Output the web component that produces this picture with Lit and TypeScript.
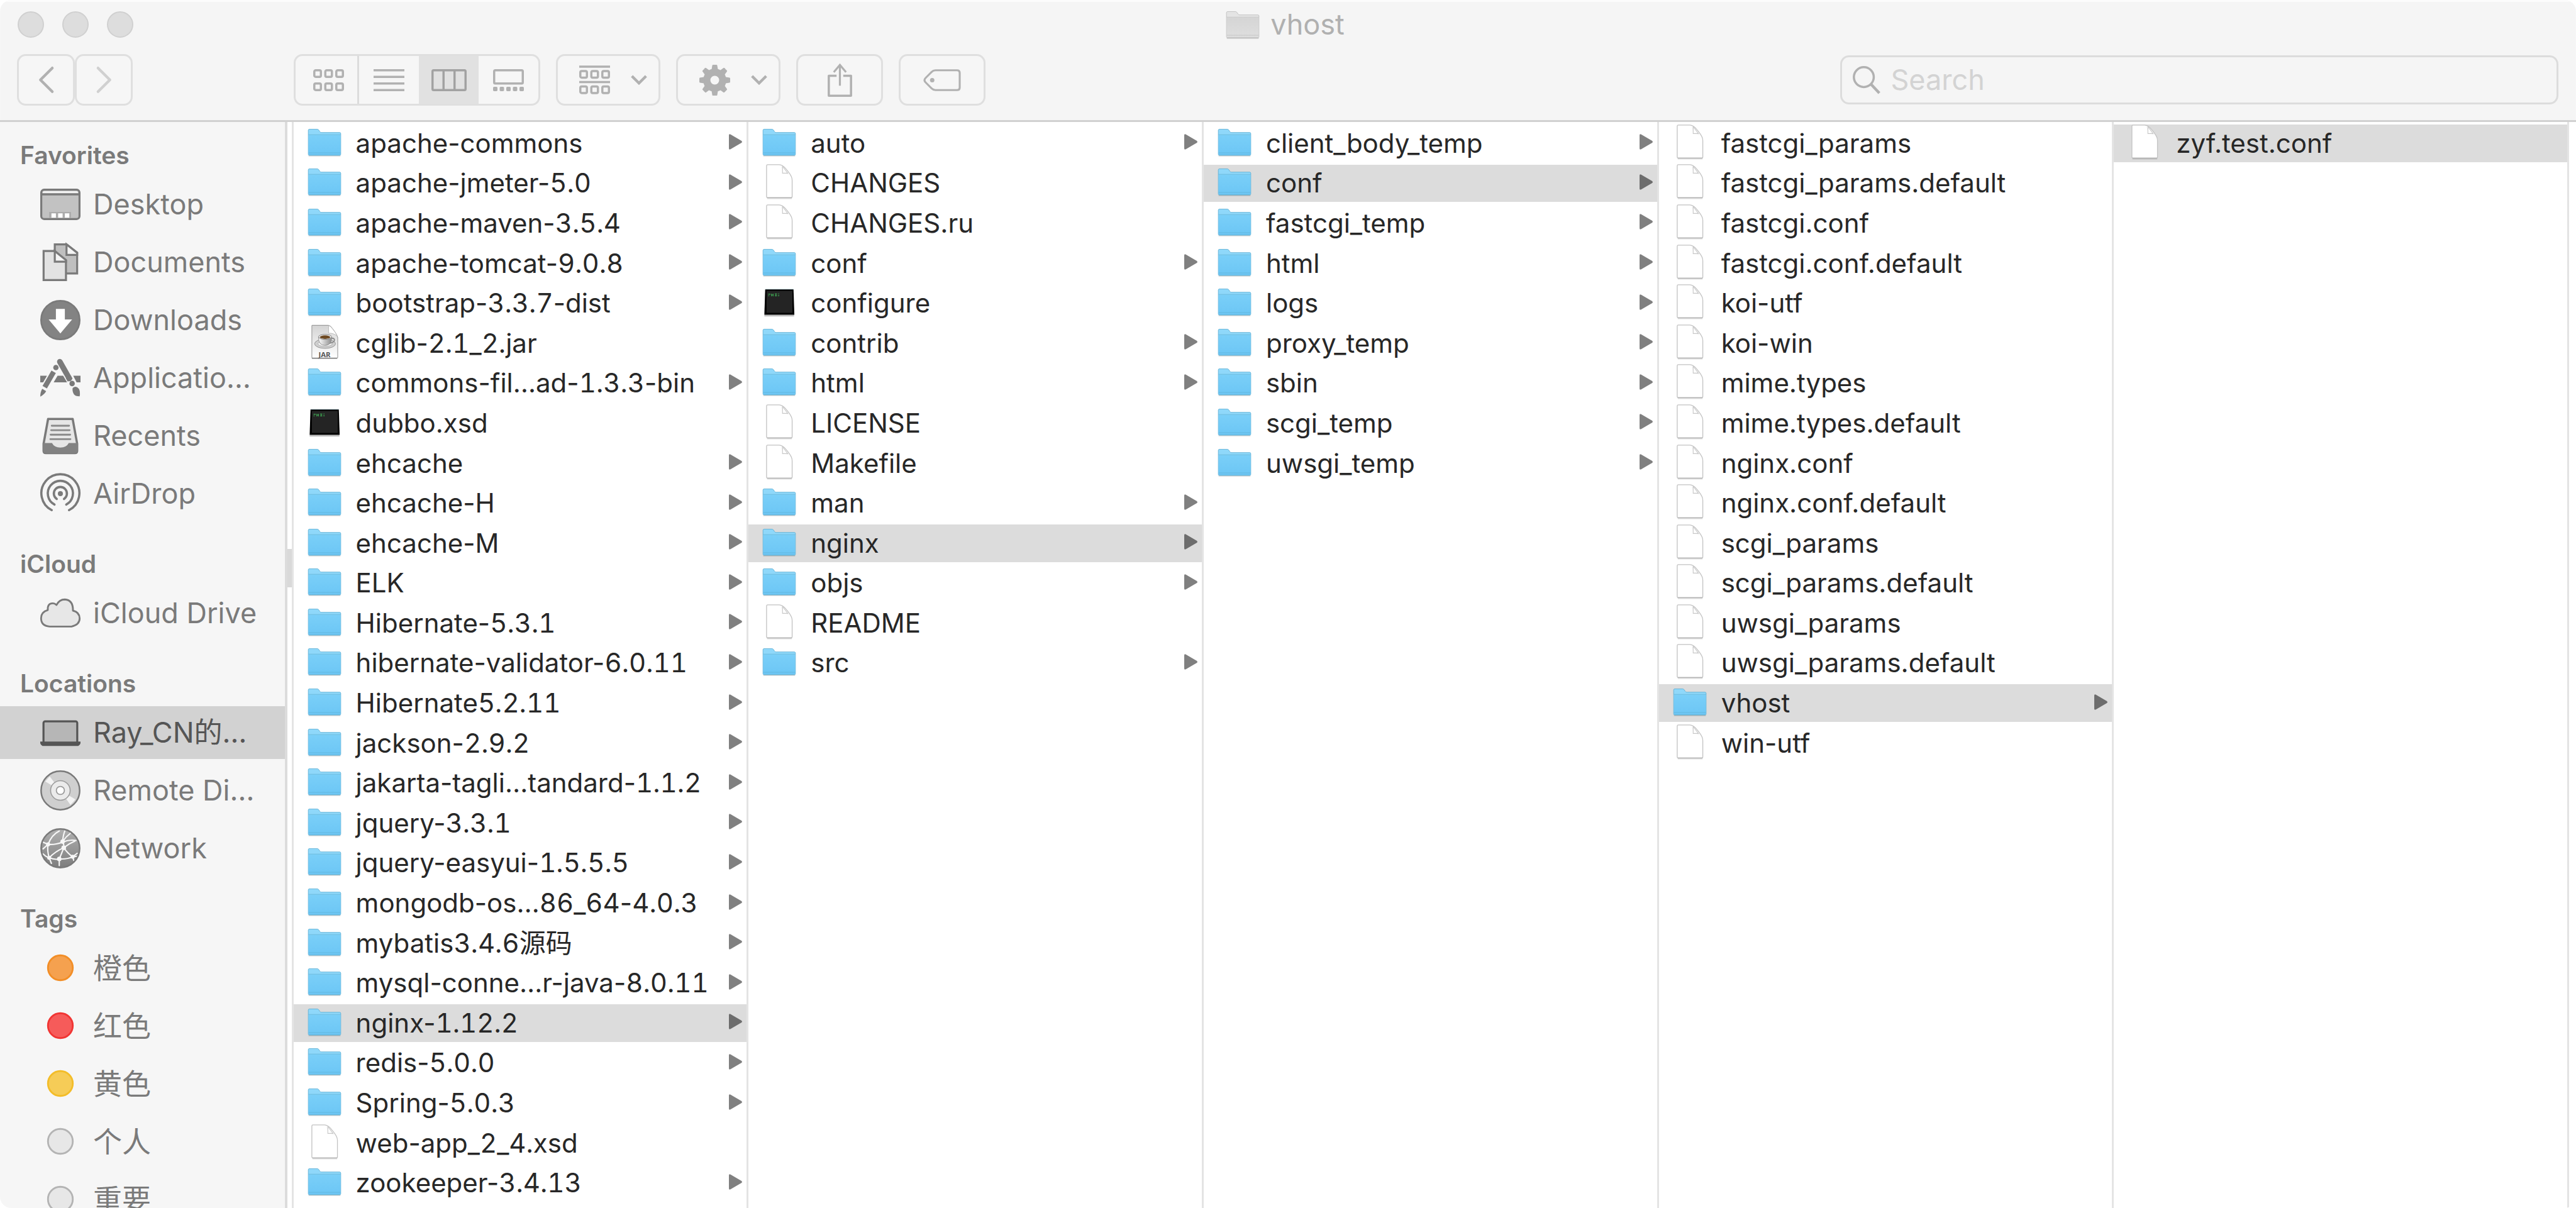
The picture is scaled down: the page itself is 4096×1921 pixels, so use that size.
import { LitElement, html, svg, css, nothing } from "lit";
import type { SVGTemplateResult } from "lit";
import { customElement, property, state } from "lit/decorators.js";
import { classMap } from "lit/directives/class-map.js";

type FileKind = "folder" | "doc" | "exec" | "jar";

interface FileEntry {
  name: string;
  kind: FileKind;
}

interface Place {
  label: string;
  icon: string;
}

interface Section {
  title: string;
  lang?: string;
  places: Place[];
}

const dir = (name: string): FileEntry => ({ name, kind: "folder" });
const doc = (name: string): FileEntry => ({ name, kind: "doc" });

const COLUMNS: { selected: string; files: FileEntry[] }[] = [
  {
    selected: "nginx-1.12.2",
    files: [
      dir("apache-commons"),
      dir("apache-jmeter-5.0"),
      dir("apache-maven-3.5.4"),
      dir("apache-tomcat-9.0.8"),
      dir("bootstrap-3.3.7-dist"),
      { name: "cglib-2.1_2.jar", kind: "jar" },
      dir("commons-fil…ad-1.3.3-bin"),
      { name: "dubbo.xsd", kind: "exec" },
      dir("ehcache"),
      dir("ehcache-H"),
      dir("ehcache-M"),
      dir("ELK"),
      dir("Hibernate-5.3.1"),
      dir("hibernate-validator-6.0.11"),
      dir("Hibernate5.2.11"),
      dir("jackson-2.9.2"),
      dir("jakarta-tagli…tandard-1.1.2"),
      dir("jquery-3.3.1"),
      dir("jquery-easyui-1.5.5.5"),
      dir("mongodb-os…86_64-4.0.3"),
      dir("mybatis3.4.6源码"),
      dir("mysql-conne…r-java-8.0.11"),
      dir("nginx-1.12.2"),
      dir("redis-5.0.0"),
      dir("Spring-5.0.3"),
      doc("web-app_2_4.xsd"),
      dir("zookeeper-3.4.13"),
    ],
  },
  {
    selected: "nginx",
    files: [
      dir("auto"),
      doc("CHANGES"),
      doc("CHANGES.ru"),
      dir("conf"),
      { name: "configure", kind: "exec" },
      dir("contrib"),
      dir("html"),
      doc("LICENSE"),
      doc("Makefile"),
      dir("man"),
      dir("nginx"),
      dir("objs"),
      doc("README"),
      dir("src"),
    ],
  },
  {
    selected: "conf",
    files: [
      dir("client_body_temp"),
      dir("conf"),
      dir("fastcgi_temp"),
      dir("html"),
      dir("logs"),
      dir("proxy_temp"),
      dir("sbin"),
      dir("scgi_temp"),
      dir("uwsgi_temp"),
    ],
  },
  {
    selected: "vhost",
    files: [
      doc("fastcgi_params"),
      doc("fastcgi_params.default"),
      doc("fastcgi.conf"),
      doc("fastcgi.conf.default"),
      doc("koi-utf"),
      doc("koi-win"),
      doc("mime.types"),
      doc("mime.types.default"),
      doc("nginx.conf"),
      doc("nginx.conf.default"),
      doc("scgi_params"),
      doc("scgi_params.default"),
      doc("uwsgi_params"),
      doc("uwsgi_params.default"),
      dir("vhost"),
      doc("win-utf"),
    ],
  },
  { selected: "zyf.test.conf", files: [doc("zyf.test.conf")] },
];

const SECTIONS: Section[] = [
  {
    title: "Favorites",
    places: [
      { label: "Desktop", icon: "desktop" },
      { label: "Documents", icon: "documents" },
      { label: "Downloads", icon: "downloads" },
      { label: "Applicatio…", icon: "applications" },
      { label: "Recents", icon: "recents" },
      { label: "AirDrop", icon: "airdrop" },
    ],
  },
  { title: "iCloud", places: [{ label: "iCloud Drive", icon: "cloud" }] },
  {
    title: "Locations",
    places: [
      { label: "Ray_CN的…", icon: "laptop" },
      { label: "Remote Di…", icon: "disc" },
      { label: "Network", icon: "network" },
    ],
  },
  {
    title: "Tags",
    lang: "zh-CN",
    places: [
      { label: "橙色", icon: "tag-orange" },
      { label: "红色", icon: "tag-red" },
      { label: "黄色", icon: "tag-yellow" },
      { label: "个人", icon: "tag-none" },
      { label: "重要", icon: "tag-none" },
    ],
  },
];

/* ---------- file icons, drawn on a 64 x 64 grid ---------- */

const folder = (
  back: string,
  top: string,
  bottom: string,
  edge: string
): SVGTemplateResult => svg`
  <defs>
    <linearGradient id="face" x1="0" y1="0" x2="0" y2="1">
      <stop offset="0" stop-color=${top} />
      <stop offset="1" stop-color=${bottom} />
    </linearGradient>
  </defs>
  <path d="M3 57h58" stroke="#000" stroke-opacity=".16" stroke-width="2" />
  <path d="M2.500 10.500q0-2 2-2h14q2 0 3 1.500l2 3q1 1.500 3 1.500h33q2 0 2 2v37.500q0 2-2 2h-55q-2 0-2-2z" fill=${back} stroke=${edge} />
  <path d="M3 19h58v34.500q0 2-2 2h-54q-2 0-2-2z" fill="url(#face)" />
  <path d="M3 18.500h58" stroke=${edge} stroke-opacity=".8" />
  <path d="M3 51.500h58M4 55.500h56" stroke=${edge} stroke-opacity=".8" />
`;

const FILE_ICONS: Record<string, SVGTemplateResult> = {
  folder: folder("#8fd8fa", "#7acff8", "#6cc6f5", "#5fafd3"),
  "folder-dim": folder("#e4e4e4", "#d5d5d5", "#dedede", "#bdbdbd"),
  doc: svg`
    <path d="M10 62.500h45" stroke="#000" stroke-opacity=".14" stroke-width="2" />
    <path d="M9 3q0-2 2-2h21q6 0 12 7.500q7 8 10 14q1.500 3 1.500 7v29q0 2.500-2 2.500h-42.500q-2 0-2-2z" fill="#fff" stroke="#c2c2c2" stroke-width="1.500" />
    <path d="M33 1.500q5 5 5 16q6-2 12 2.500" fill="#ededed" fill-opacity=".7" stroke="none" />
    <path d="M38 4v12.500h9.500z" fill="#fff" stroke="#c8c8c8" stroke-width="1.300" />
    <path d="M10 61h44.500" stroke="#b2b2b2" stroke-width="1.500" />
  `,
  exec: svg`
    <path d="M5 57h54" stroke="#000" stroke-opacity=".25" stroke-width="3" />
    <path d="M7 9h51" stroke="#b5dcea" />
    <path d="M6.500 9.500h51.500l1.500 46h-54.500z" fill="#000" />
    <path d="M9 12h47v40h-47z" fill="#242424" />
    <path d="M12 18h4M12 21h2M18 17v5M21 17v5M18 19.500h3M24 17.500h4M24 21h4M26 17v5M31 16.500v1.500M31 19v3" stroke="#3fae55" stroke-width="1.500" opacity=".85" />
  `,
  jar: svg`
    <defs>
      <linearGradient id="sheet" x1="0" y1="0" x2="0" y2="1">
        <stop offset="0" stop-color="#d4d4d4" />
        <stop offset=".65" stop-color="#f0f0f0" />
        <stop offset="1" stop-color="#fff" />
      </linearGradient>
      <linearGradient id="cup" x1="0" y1="0" x2="1" y2="0">
        <stop offset="0" stop-color="#fff" />
        <stop offset="1" stop-color="#8c8c8c" />
      </linearGradient>
    </defs>
    <path d="M9 2.500q0-1 1-1h29q3 0 8 7q7 9 9 15v36q0 1.500-1.500 1.500h-44q-1.500 0-1.500-1.500z" fill="url(#sheet)" stroke="#9c9c9c" stroke-width="1.300" />
    <path d="M39.500 2v14q8-1 15.500 5q-3-7-8-12.500q-4-6-7.500-6.500z" fill="#fff" stroke="#b5b5b5" />
    <ellipse cx="33" cy="35" rx="19" ry="8.500" fill="#cfcfcf" stroke="#8d8d8d" />
    <ellipse cx="33" cy="35" rx="13" ry="5" fill="#f1f1f1" stroke="#aaa" />
    <path d="M43 25q8-1 7 4q-1 4-9 5" fill="none" stroke="#8a8a8a" stroke-width="2.200" />
    <path d="M21 23q0 15 12 15t12-15z" fill="url(#cup)" stroke="#8c8c8c" />
    <ellipse cx="33" cy="22.500" rx="12" ry="4.500" fill="#efefef" stroke="#777" />
    <ellipse cx="33" cy="23" rx="9.500" ry="3.200" fill="#6e4a23" />
    <text x="32" y="59" text-anchor="middle" font-family="Open Sans, Liberation Sans, sans-serif" font-weight="700" font-size="13" fill="#555">JAR</text>
    <path d="M9 61.500h46" stroke="#777" stroke-width="1.500" />
  `,
};

/* ---------- sidebar icons, drawn on a 72 x 72 grid ---------- */

const tag = (fill: string, stroke: string): SVGTemplateResult => svg`
  <circle cx="36" cy="36" r="22.200" fill=${fill} stroke=${stroke} stroke-width="3.200" />
`;

const PLACE_ICONS: Record<string, SVGTemplateResult> = {
  desktop: svg`
    <rect x="2" y="10" width="68" height="52" rx="5" fill="#c2c2c2" />
    <path d="M4 17q0-5 4-5h56q4 0 4 5z" fill="#f2f2f2" />
    <path d="M16 60v-10.500h39v10.500" fill="#ababab" />
    <path d="M20 52h8v8h-8zM32 52h8v8h-8zM44 52h8v8h-8z" fill="#fff" />
    <path d="M2 18h68" stroke="currentColor" stroke-width="4" />
    <rect x="1.800" y="9.800" width="68.400" height="52.400" rx="5" fill="none" stroke="currentColor" stroke-width="3.600" />
  `,
  documents: svg`
    <g stroke="currentColor" stroke-width="3.600" stroke-linejoin="miter">
      <path d="M26 4h21l19 15v37h-40z" fill="#bfbfbf" />
      <path d="M47 4v19h19v-4z" fill="#f5f5f5" />
      <path d="M6 16h20l20 17v35h-40z" fill="#e2e2e2" />
      <path d="M26 16v19h20v-3z" fill="#f5f5f5" />
    </g>
  `,
  downloads: svg`
    <circle cx="36" cy="36" r="34.500" fill="#838383" stroke="currentColor" stroke-width="3" />
    <path d="M28 16h16v19h13l-21 25-21-25h13z" fill="#fff" />
  `,
  applications: svg`
    <path d="M0 32h12l-2 12h-10zM31 32h10l7 12h-24zM59 32h13v12h-7z" fill="currentColor" />
    <g fill="none" stroke="#f6f6f6" stroke-width="13">
      <path d="M28 18 5 57M35 7l24 42" />
    </g>
    <circle cx="28" cy="17.500" r="4.800" fill="currentColor" />
    <circle cx="57" cy="46" r="4.800" fill="currentColor" />
    <g fill="none" stroke="currentColor">
      <path d="M24 25 8 52.500" stroke-width="9" />
      <path d="M35 7l17 30" stroke-width="10" stroke-linecap="round" />
      <path d="M50 34l3.500 6" stroke-width="10" />
    </g>
    <path d="M3.500 55.500l7 4q-2 5-10.500 10q0-8 3.500-14z" fill="currentColor" />
    <path d="M58 54q6-5 11 1.500q3 5 1.500 13.500q-8 0-10.500-4q-3-5-2-11z" fill="currentColor" />
  `,
  recents: svg`
    <path d="M14 6h44l8 44v13q0 4-4 4h-52q-4 0-4-4v-13z" fill="#e6e6e6" stroke="currentColor" stroke-width="4" stroke-linejoin="round" />
    <path d="M5 49h16q4 8 15 8t15-8h16v13q0 5-5 5h-52q-5 0-5-5z" fill="#828282" />
    <path d="M20.500 18h31M19.500 26h33M18.500 34h35M18 42h36" stroke="#8a8a8a" stroke-width="3.200" stroke-linecap="round" />
  `,
  airdrop: svg`
    <circle cx="36" cy="36" r="4.500" fill="currentColor" />
    <g fill="none" stroke="currentColor" stroke-width="4" stroke-linecap="round">
      <path d="M29.500 45.500a11.700 11.700 0 1 1 13 0" />
      <path d="M25.500 55.500a22.500 22.500 0 1 1 21 0" />
      <path d="M20.500 65.500a34 34 0 1 1 31 0" />
    </g>
  `,
  cloud: svg`
    <path d="M17 60q-15.500-1-15.500-15q0-11 12-14.500q-1-12 9-12q3.500 0 6.500 3q5-10 15-10q15 1 14.500 20q12 3 12 14t-14.500 14.500z" fill="#e7e7e7" stroke="currentColor" stroke-width="3.200" stroke-linejoin="round" />
  `,
  laptop: svg`
    <rect x="5.800" y="15.800" width="60.400" height="40" rx="3" fill="#b6b6b6" stroke="currentColor" stroke-width="3.600" />
    <path d="M0 52h72v3q-2 5-6 5h-60q-4 0-6-5z" fill="currentColor" />
  `,
  disc: svg`
    <circle cx="36" cy="36" r="34.500" fill="#cfcfcf" />
    <path d="M36 36 9 20l8-9zM36 36l27 16-9 10z" fill="#f4f4f4" />
    <circle cx="36" cy="36" r="34.500" fill="none" stroke="currentColor" stroke-width="2.800" />
    <circle cx="36" cy="36" r="17.500" fill="#ebebeb" stroke="#9b9b9b" stroke-width="1.800" />
    <circle cx="36" cy="36" r="7.200" fill="#fff" stroke="#9b9b9b" stroke-width="2" />
  `,
  network: svg`
    <defs>
      <linearGradient id="globe" x1="0" y1="0" x2="0" y2="1">
        <stop offset="0" stop-color="#b0b0b0" />
        <stop offset="1" stop-color="#7e7e7e" />
      </linearGradient>
    </defs>
    <circle cx="36" cy="36" r="34.500" fill="url(#globe)" />
    <g fill="none" stroke="#f7f7f7" stroke-width="2.400" stroke-linecap="round">
      <path d="M14 29Q20 12 34 5M15 29Q26 30 40 25Q52 20 64 22M40 24Q41 12 44 5M40 24Q46 15 54 9M40 24Q43 30 42 35M42 35Q52 27 62 23M42 35Q26 42 16 53M42 35Q38 46 34 55M42 35Q50 46 58 51M14 29Q12 40 16 53M5 25L14 29M5 37L14 29M5 46Q10 51 16 53Q26 57 34 55Q48 56 58 51L66 45M34 55V67M16 53L20 63M58 51L60 58M58 51L68 50" />
    </g>
    <g fill="#f7f7f7">
      <circle cx="14" cy="29" r="3.600" />
      <circle cx="40" cy="24" r="4" />
      <circle cx="42" cy="35" r="4.200" />
      <circle cx="16" cy="53" r="3.600" />
      <circle cx="34" cy="55" r="4" />
      <circle cx="58" cy="51" r="3.600" />
    </g>
    <circle cx="36" cy="36" r="34.500" fill="none" stroke="currentColor" stroke-width="2.800" />
  `,
  "tag-orange": tag("#f5a14f", "#f28e27"),
  "tag-red": tag("#f65b5a", "#f13533"),
  "tag-yellow": tag("#f6cc57", "#f3bd29"),
  "tag-none": tag("#e7e7e7", "#b4b4b4"),
};

/* ---------- toolbar glyphs ---------- */

const cells = (top: number): SVGTemplateResult => svg`
  ${[0, 20, 40].map(
    (x) => svg`<rect x=${x + 2} y=${top + 2} width="12" height="12" rx="2.500" />`
  )}
`;

const glyph = (
  width: number,
  height: number,
  cls: string,
  body: SVGTemplateResult
) => html`
  <svg class="glyph ${cls}" viewBox="0 0 ${width} ${height}" aria-hidden="true">
    ${body}
  </svg>
`;

const backGlyph = glyph(
  28,
  48,
  "g-arrow",
  svg`<path d="M25 2.500 3.500 24 25 45.500" stroke-width="5" stroke-linecap="round" stroke-linejoin="round" />`
);
const forwardGlyph = glyph(
  28,
  48,
  "g-arrow",
  svg`<path d="M3 2.500 24.500 24 3 45.500" stroke-width="5" stroke-linecap="round" stroke-linejoin="round" />`
);
const chevronGlyph = glyph(
  30,
  18,
  "g-chevron",
  svg`<path d="M2 2l13 13L28 2" stroke-width="5" />`
);
const iconsGlyph = glyph(56, 40, "g-view", svg`${cells(0)}${cells(24)}`);
const listGlyph = glyph(
  56,
  40,
  "g-view",
  svg`<path d="M0 2h56M0 14h56M0 26h56M0 38h56" />`
);
const columnsGlyph = glyph(
  64,
  40,
  "g-columns",
  svg`<rect x="2" y="2" width="60" height="36" rx="2" /><path d="M22 2v36M42 2v36" />`
);
const galleryGlyph = glyph(
  56,
  40,
  "g-view",
  svg`<rect x="2" y="2" width="52" height="24" rx="2" />
    ${[0, 12, 24, 36, 48].map(
      (x) => svg`<rect x=${x} y="32" width="8" height="8" rx="2" class="solid" />`
    )}`
);
const groupGlyph = glyph(
  56,
  52,
  "g-group",
  svg`<path d="M0 2h56M0 30h56" />${cells(8)}${cells(36)}`
);
const gearGlyph = glyph(
  56,
  56,
  "g-gear",
  svg`<circle cx="28" cy="28" r="14.500" stroke-width="13" />
    ${[0, 45, 90, 135, 180, 225, 270, 315].map(
      (a) =>
        svg`<path class="solid" d="M22 10l1.500-9q.3-1 1.500-1h6q1.200 0 1.500 1l1.500 9z" transform="rotate(${a} 28 28)" />`
    )}`
);
const shareGlyph = glyph(
  44,
  60,
  "g-share",
  svg`<path d="M16 22h-14v36h40v-36h-14" stroke-linejoin="round" />
    <path d="M22 40V3M11 15.500 22 2.500l11 13" stroke-width="3.600" />`
);
const tagGlyph = glyph(
  68,
  40,
  "g-tag",
  svg`<path d="M22 2h39q5 0 5 5v26q0 5-5 5h-39q-4 0-7-3l-11-11q-4-4 0-8l11-11q3-3 7-3z" stroke-width="3.600" />
    <circle cx="16" cy="20" r="4" class="solid" />`
);
const searchGlyph = glyph(
  50,
  50,
  "g-search",
  svg`<circle cx="20" cy="20" r="18" stroke-width="4" /><path d="M33 33l15 16" stroke-width="5" />`
);

@customElement("finder-icon")
export class FinderIcon extends LitElement {
  @property() name = "folder";

  static styles = css`
    :host {
      display: block;
      flex: none;
    }
    svg {
      display: block;
      width: 100%;
      height: 100%;
      overflow: visible;
    }
  `;

  render() {
    const file = FILE_ICONS[this.name];
    return html`<svg viewBox=${file ? "0 0 64 64" : "0 0 72 72"} fill="none" aria-hidden="true">
      ${file ?? PLACE_ICONS[this.name]}
    </svg>`;
  }
}

@customElement("finder-toolbar")
export class FinderToolbar extends LitElement {
  @property() heading = "";
  @state() private view = "columns";

  static styles = css`
    :host {
      display: block;
      border-bottom: 3px solid #d1d1d1;
      background: #f5f5f5;
      box-shadow: inset 0 3px 2px #fcfcfc;
    }
    .titlebar {
      display: grid;
      grid-template-columns: 1fr auto 1fr;
      align-items: center;
      height: 78px;
      padding: 0 28px;
    }
    .lights {
      display: flex;
      gap: 29px;
    }
    .light {
      width: 42px;
      height: 42px;
      padding: 0;
      border: 2px solid #d0d0d0;
      border-radius: 50%;
      background: #dddddd;
    }
    .title {
      display: flex;
      align-items: center;
      gap: 16px;
      margin: 0;
      padding-right: 10px;
      color: #b0b0b0;
      font-size: 45px;
      font-weight: 400;
      line-height: 56px;
    }
    .title finder-icon {
      width: 56px;
      height: 56px;
    }
    .tools {
      display: flex;
      align-items: center;
      height: 98px;
      padding: 0 28px 15px 27px;
      gap: 25px;
    }
    button {
      font: inherit;
      color: inherit;
    }
    .btn,
    .segments {
      box-sizing: border-box;
      height: 82px;
      border: 3px solid #dfdfdf;
      border-radius: 14px;
      background: #f6f6f6;
      color: #b1b1b1;
    }
    .btn {
      display: flex;
      align-items: center;
      justify-content: center;
      width: 138px;
      padding: 0;
    }
    .nav {
      display: flex;
      margin-right: 231px;
    }
    .nav .btn {
      width: 92px;
    }
    .nav .btn:disabled {
      color: #d0d0d0;
    }
    .menu {
      width: 166px;
      justify-content: space-between;
      padding: 0 18px 0 34px;
    }
    .segments {
      display: flex;
      overflow: hidden;
    }
    .segment {
      display: flex;
      align-items: center;
      justify-content: center;
      width: 95px;
      padding: 0;
      border: 0;
      background: none;
    }
    .segment:first-child {
      box-sizing: border-box;
      width: 101px;
      padding-left: 6px;
      border-right: 3px solid #dcdcdc;
    }
    .segment.active {
      background: #e1e1e1;
      color: #a2a2a2;
    }
    .search {
      display: flex;
      align-items: center;
      gap: 16px;
      box-sizing: border-box;
      width: 28.25%;
      height: 78px;
      margin-left: auto;
      padding: 0 17px;
      border: 3px solid #dcdcdc;
      border-radius: 14px;
      background: #f5f5f5;
      color: #b1b1b1;
    }
    .search input {
      flex: 1;
      min-width: 0;
      padding: 0;
      border: 0;
      outline: 0;
      background: none;
      color: #555555;
      font: inherit;
      font-size: 45px;
      line-height: 56px;
    }
    .search input::placeholder {
      color: #d3d3d3;
      opacity: 1;
    }
    .glyph {
      display: block;
      flex: none;
      overflow: visible;
      fill: none;
      stroke: currentColor;
      stroke-width: 4px;
    }
    .glyph .solid {
      fill: currentColor;
      stroke: none;
    }
    .g-arrow {
      width: 25px;
      height: 42px;
    }
    .g-chevron {
      width: 26px;
      height: 16px;
    }
    .g-view {
      width: 49px;
      height: 35px;
    }
    .g-columns {
      width: 56px;
      height: 35px;
    }
    .g-group {
      width: 49px;
      height: 46px;
    }
    .g-gear {
      width: 49px;
      height: 49px;
    }
    .g-share {
      width: 39px;
      height: 53px;
    }
    .g-tag {
      width: 60px;
      height: 35px;
    }
    .g-search {
      width: 44px;
      height: 44px;
    }
  `;

  render() {
    const views = [
      { id: "icons", label: "Icons", glyph: iconsGlyph },
      { id: "list", label: "List", glyph: listGlyph },
      { id: "columns", label: "Columns", glyph: columnsGlyph },
      { id: "gallery", label: "Gallery", glyph: galleryGlyph },
    ];
    return html`
      <div class="titlebar">
        <div class="lights">
          <button class="light" aria-label="Close"></button>
          <button class="light" aria-label="Minimize"></button>
          <button class="light" aria-label="Zoom"></button>
        </div>
        <h1 class="title">
          <finder-icon name="folder-dim"></finder-icon>
          <span>${this.heading}</span>
        </h1>
      </div>
      <div class="tools">
        <div class="nav">
          <button class="btn" aria-label="Back">${backGlyph}</button>
          <button class="btn" aria-label="Forward" disabled>${forwardGlyph}</button>
        </div>
        <div class="segments" role="group" aria-label="View">
          ${views.map(
            (v) => html`<button
              class=${classMap({ segment: true, active: this.view === v.id })}
              aria-label=${v.label}
              aria-pressed=${this.view === v.id ? "true" : "false"}
              @click=${() => (this.view = v.id)}
            >
              ${v.glyph}
            </button>`
          )}
        </div>
        <button class="btn menu" aria-label="Group">${groupGlyph}${chevronGlyph}</button>
        <button class="btn menu" aria-label="Action">${gearGlyph}${chevronGlyph}</button>
        <button class="btn" aria-label="Share">${shareGlyph}</button>
        <button class="btn" aria-label="Edit Tags">${tagGlyph}</button>
        <label class="search">
          ${searchGlyph}
          <input type="search" placeholder="Search" aria-label="Search" />
        </label>
      </div>
    `;
  }
}

@customElement("finder-sidebar")
export class FinderSidebar extends LitElement {
  @state() private current = "laptop";

  static styles = css`
    :host {
      display: flex;
      flex-direction: column;
      gap: 44px;
      padding-top: 27px;
      overflow: hidden;
      background: #f6f6f6;
      color: #7a7a7a;
    }
    .heading {
      margin: 0 0 10px;
      padding-left: 32px;
      font-size: 39px;
      font-weight: 600;
      line-height: 52px;
    }
    .list {
      display: flex;
      flex-direction: column;
      gap: 8px;
      margin: 0;
      padding: 0;
      font-size: 45px;
      line-height: 56px;
      list-style: none;
    }
    .list:lang(zh) {
      font-size: 46px;
    }
    .place {
      display: flex;
      align-items: center;
      gap: 20px;
      height: 84px;
      padding-left: 64px;
      color: inherit;
      text-decoration: none;
      white-space: nowrap;
    }
    .place finder-icon {
      width: 64px;
      height: 64px;
    }
    .place.current {
      background: #d2d2d2;
      color: #555555;
    }
  `;

  render() {
    return SECTIONS.map(
      (section) => html`
        <section>
          <h2 class="heading">${section.title}</h2>
          <ul class="list" lang=${section.lang ?? "en"}>
            ${section.places.map(
              (place) => html`<li>
                <a
                  class=${classMap({ place: true, current: place.icon === this.current })}
                  href="#"
                >
                  <finder-icon name=${place.icon}></finder-icon>
                  <span>${place.label}</span>
                </a>
              </li>`
            )}
          </ul>
        </section>
      `
    );
  }
}

/* Digits get equal widths; the letters and hyphens around them do not. */
const fileName = (name: string) =>
  name
    .split(/(\d[\d._]*)/)
    .map((part, i) => (i % 2 ? html`<span class="digits">${part}</span>` : part));

@customElement("finder-column")
export class FinderColumn extends LitElement {
  @property({ attribute: false }) files: FileEntry[] = [];
  @property() selected = "";

  static styles = css`
    :host {
      display: block;
      min-width: 0;
      border-right: 3px solid #e4e4e4;
    }
    .rows {
      display: grid;
      grid-template-rows: repeat(27, 1fr);
      row-gap: 4px;
      box-sizing: border-box;
      height: 100%;
      margin: 0;
      padding: 4px 0 10px;
      list-style: none;
    }
    .row {
      display: grid;
    }
    .file {
      display: flex;
      align-items: center;
      width: 100%;
      min-width: 0;
      padding: 0 7px 0 21px;
      border: 0;
      background: none;
      color: #272727;
      font: inherit;
      font-size: 42px;
      line-height: 56px;
      text-align: left;
      white-space: nowrap;
    }
    .file.selected {
      background: #dcdcdc;
    }
    .file finder-icon {
      width: 56px;
      height: 56px;
      margin: -4px 22px 0 0;
    }
    .name {
      flex: 1;
      min-width: 0;
    }
    .digits {
      font-variant-numeric: tabular-nums;
    }
    .more {
      flex: none;
      width: 21px;
      height: 25px;
      margin-bottom: 4px;
      fill: #808080;
    }
    .selected .more {
      fill: #6d6d6d;
    }
  `;

  render() {
    return html`<ul class="rows">
      ${this.files.map(
        (file) => html`<li class="row">
          <button
            class=${classMap({ file: true, selected: file.name === this.selected })}
            @click=${() => (this.selected = file.name)}
          >
            <finder-icon name=${file.kind}></finder-icon>
            <span class="name">${fileName(file.name)}</span>
            ${file.kind === "folder"
              ? html`<svg class="more" viewBox="0 0 24 28" aria-hidden="true">
                  <path d="M0 2q0-3 3-1.500l19.500 11.500q3 2 0 4l-19.500 11.500q-3 1.500-3-1.500z" />
                </svg>`
              : nothing}
          </button>
        </li>`
      )}
    </ul>`;
  }
}

@customElement("app-root")
export class AppRoot extends LitElement {
  static styles = css`
    :host {
      display: block;
      height: 100vh;
      background: #ffffff;
      font-family: Inter, "Noto Sans CJK SC", "Liberation Sans", sans-serif;
    }
    .window {
      display: flex;
      flex-direction: column;
      height: 100%;
      overflow: hidden;
      border-radius: 18px;
      background: #ffffff;
    }
    .body {
      display: flex;
      flex: 1;
      min-height: 0;
    }
    .sidebar {
      flex: none;
      width: 11.05%;
    }
    .gutter {
      flex: none;
      box-sizing: border-box;
      width: 14px;
      padding-top: 679px;
      border: solid #dcdcdc;
      border-width: 0 3px 0 4px;
      border-right-color: #e4e4e4;
    }
    .handle {
      height: 61px;
      background: #d9d9d9;
    }
    .columns {
      display: grid;
      flex: 1;
      grid-template-columns: repeat(5, minmax(0, 1fr));
      min-width: 0;
      padding-right: 11px;
    }
  `;

  render() {
    return html`
      <div class="window">
        <finder-toolbar heading="vhost"></finder-toolbar>
        <div class="body">
          <finder-sidebar class="sidebar"></finder-sidebar>
          <div class="gutter"><div class="handle"></div></div>
          <main class="columns">
            ${COLUMNS.map(
              (column) => html`<finder-column
                .files=${column.files}
                selected=${column.selected}
              ></finder-column>`
            )}
          </main>
        </div>
      </div>
    `;
  }
}
